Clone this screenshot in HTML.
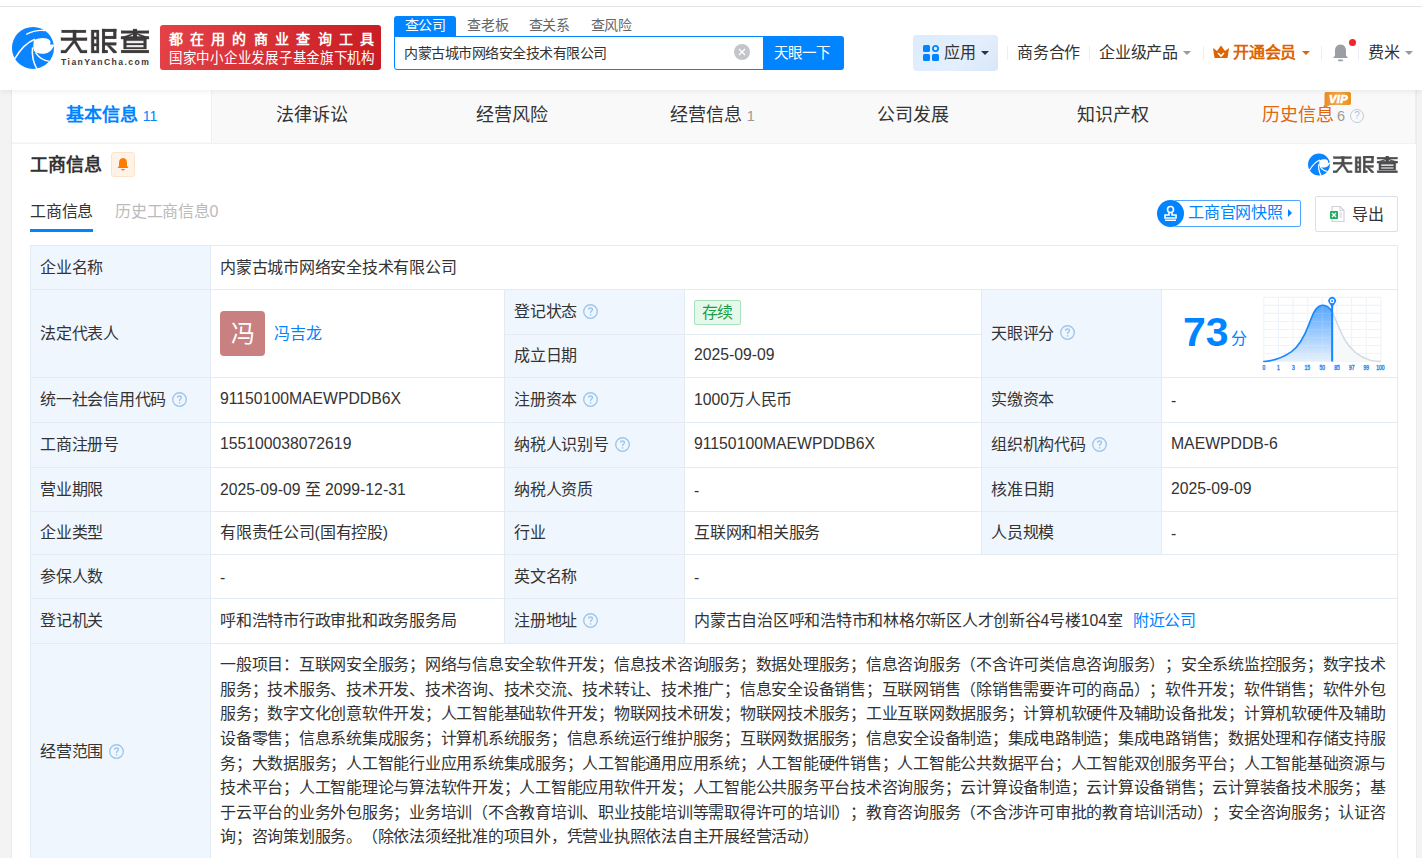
<!DOCTYPE html><html lang="zh-CN"><head><meta charset="utf-8"><style>
*{margin:0;padding:0;box-sizing:border-box}
html,body{text-spacing-trim:space-all;width:1422px;height:858px;overflow:hidden;background:#f3f3f3;font-family:"Liberation Sans",sans-serif;color:#333}
.abs{position:absolute}
.t{position:absolute;white-space:nowrap;line-height:1}
</style></head><body>
<div style="position:absolute;left:0;top:0;width:1422px;height:90px;z-index:5">
<div class="abs" style="left:0;top:0;width:1422px;height:90px;background:#fff;box-shadow:0 2px 5px rgba(0,0,0,0.06)"></div>
<div class="abs" style="left:0;top:6px;width:1422px;height:1px;background:#e5e5e5"></div>
<svg class="abs" style="left:8px;top:22px" width="52" height="52" viewBox="0 0 858 858">
<circle cx="412" cy="428" r="347" fill="#0a84ff"/>
<path d="M430 298 C520 250 640 250 690 300 C710 330 700 360 688 372 L780 372 L780 400 L752 404 C720 480 650 530 560 525 C500 520 470 510 455 505 C420 470 405 420 430 298 Z" fill="#fff"/>
<path d="M110 610 C190 470 300 340 445 285" stroke="#fff" stroke-width="26" fill="none"/>
<path d="M300 205 C400 150 520 130 610 140" stroke="#fff" stroke-width="22" fill="none"/>
<path d="M405 420 C390 560 420 680 480 780" stroke="#fff" stroke-width="26" fill="none"/>
<path d="M455 505 C520 600 600 640 680 650" stroke="#fff" stroke-width="24" fill="none"/>
</svg>
<svg class="abs" style="left:55px;top:22px" width="100" height="50" viewBox="0 0 1422 711" fill="#3d393a" stroke="#3d393a" stroke-width="4">
<rect x="95" y="115" width="345" height="38"/>
<rect x="85" y="225" width="370" height="40"/>
<rect x="255" y="115" width="45" height="150"/>
<path d="M255 265 L300 265 L190 400 L160 440 L85 440 L85 400 L145 400 Z"/>
<path d="M255 265 L300 265 L380 400 L455 400 L455 440 L360 440 Z"/>
<path d="M515 115 H625 V440 H515 Z M555 150 V210 H590 V150 Z M555 245 V305 H590 V245 Z M555 342 V405 H590 V342 Z" fill-rule="evenodd"/>
<rect x="670" y="100" width="40" height="340"/>
<rect x="670" y="100" width="200" height="40"/>
<rect x="830" y="100" width="40" height="140"/>
<rect x="690" y="200" width="160" height="40"/>
<rect x="690" y="292" width="180" height="38"/>
<rect x="670" y="400" width="80" height="40"/>
<path d="M735 330 L780 330 L875 420 L875 440 L830 440 Z"/>
<rect x="940" y="125" width="395" height="36"/>
<rect x="1110" y="100" width="55" height="130"/>
<path d="M1110 160 L1140 160 L985 240 L940 240 L940 220 Z"/>
<path d="M1165 160 L1135 160 L1290 240 L1335 240 L1335 220 Z"/>
<rect x="940" y="205" width="395" height="36"/>
<path d="M975 240 H1300 V385 H975 Z M1015 268 V302 H1260 V268 Z M1015 328 V358 H1260 V328 Z" fill-rule="evenodd"/>
<rect x="940" y="400" width="395" height="40"/>
</svg>
<div class="t" style="left:61px;top:57.5px;font-size:8.6px;font-weight:bold;letter-spacing:1.45px;color:#3d393a">TianYanCha.com</div>
<div class="abs" style="left:160px;top:25px;width:221px;height:45px;border-radius:3px;background:linear-gradient(100deg,#e44247,#c81c22)"></div>
<div class="t" style="left:168.5px;top:32px;font-size:14px;font-weight:bold;color:#fff;letter-spacing:7.3px">都在用的商业查询工具</div>
<div class="t" style="left:168.5px;top:50px;font-size:15px;color:#fff;letter-spacing:0.25px;font-weight:500;transform:scaleX(0.9);transform-origin:0 0">国家中小企业发展子基金旗下机构</div>
<div class="abs" style="left:394px;top:16px;width:62px;height:21px;background:#0084ff;border-radius:3px 3px 0 0"></div>
<div class="t" style="left:404.5px;top:16.5px;font-size:14px;color:#fff;line-height:16px;letter-spacing:-0.25px">查公司</div>
<div class="t" style="left:467px;top:16.5px;font-size:14px;color:#666;line-height:16px;letter-spacing:-0.25px">查老板</div>
<div class="t" style="left:528.5px;top:16.5px;font-size:14px;color:#666;line-height:16px;letter-spacing:-0.25px">查关系</div>
<div class="t" style="left:590.5px;top:16.5px;font-size:14px;color:#666;line-height:16px;letter-spacing:-0.25px">查风险</div>
<div class="abs" style="left:394px;top:36px;width:371px;height:34px;border:1px solid #0084ff;border-radius:0 0 0 3px;background:#fff"></div>
<div class="t" style="left:404px;top:45px;font-size:14px;color:#333;line-height:16px;letter-spacing:-0.5px">内蒙古城市网络安全技术有限公司</div>
<svg class="abs" style="left:734px;top:44px" width="16" height="16" viewBox="0 0 16 16"><circle cx="8" cy="8" r="8" fill="#c3c5ca"/><path d="M5 5 L11 11 M11 5 L5 11" stroke="#fff" stroke-width="1.3"/></svg>
<div class="abs" style="left:763px;top:36px;width:81px;height:34px;background:#0084ff;border-radius:0 3px 3px 0"></div>
<div class="t" style="left:774px;top:44.5px;font-size:14.5px;color:#fff;line-height:16px;letter-spacing:0px">天眼一下</div>
<div class="abs" style="left:913px;top:35px;width:85px;height:36px;border-radius:4px;background:linear-gradient(135deg,#dcecfd,#e3effd 60%,#d8e6f8)"></div>
<svg class="abs" style="left:923px;top:45px" width="17" height="16" viewBox="0 0 17 16"><rect x="0" y="0" width="7" height="7" rx="1.5" fill="#0084ff"/><circle cx="12.5" cy="3.5" r="2.6" fill="none" stroke="#0084ff" stroke-width="1.8"/><rect x="0" y="9" width="7" height="7" rx="1.5" fill="#0084ff"/><rect x="9" y="9" width="7" height="7" rx="1.5" fill="#0084ff"/></svg>
<div class="t" style="left:944px;top:45px;font-size:16px;line-height:16px;color:#333;letter-spacing:-0.25px">应用</div>
<div class="abs" style="left:981px;top:51px;width:0;height:0;border-left:4px solid transparent;border-right:4px solid transparent;border-top:4px solid #333"></div>
<div class="abs" style="left:1007px;top:46px;width:1px;height:14px;background:#eceef2"></div>
<div class="abs" style="left:1089px;top:46px;width:1px;height:14px;background:#eceef2"></div>
<div class="abs" style="left:1203px;top:46px;width:1px;height:14px;background:#eceef2"></div>
<div class="abs" style="left:1321px;top:46px;width:1px;height:14px;background:#eceef2"></div>
<div class="abs" style="left:1358px;top:46px;width:1px;height:14px;background:#eceef2"></div>
<div class="t" style="left:1017px;top:45px;font-size:16px;line-height:16px;color:#333;letter-spacing:-0.25px">商务合作</div>
<div class="t" style="left:1099px;top:45px;font-size:16px;line-height:16px;color:#333;letter-spacing:-0.25px">企业级产品</div>
<div class="abs" style="left:1183px;top:51px;width:0;height:0;border-left:4px solid transparent;border-right:4px solid transparent;border-top:4px solid #999"></div>
<svg class="abs" style="left:1212px;top:45px" width="18" height="14" viewBox="0 0 18 14"><path d="M1 3 L5 6 L9 0.5 L13 6 L17 3 L15.5 13 H2.5 Z" fill="#dc6404"/><path d="M6 8 L9 11 L12 8" stroke="#fff" stroke-width="1.6" fill="none"/></svg>
<div class="t" style="left:1233px;top:45px;font-size:16px;line-height:16px;color:#dc6404;font-weight:bold;letter-spacing:-0.25px">开通会员</div>
<div class="abs" style="left:1302px;top:51px;width:0;height:0;border-left:4px solid transparent;border-right:4px solid transparent;border-top:4px solid #dc6404"></div>
<svg class="abs" style="left:1332px;top:43px" width="17" height="19" viewBox="0 0 17 19"><path d="M8.5 1.5 C4.5 1.5 3 4.5 3 8 V12.5 L1 15 H16 L14 12.5 V8 C14 4.5 12.5 1.5 8.5 1.5 Z" fill="#9a9ea5"/><rect x="6" y="16.5" width="5" height="1.8" rx="0.9" fill="#9a9ea5"/></svg>
<div class="abs" style="left:1349px;top:39px;width:7px;height:7px;border-radius:50%;background:#f5222d"></div>
<div class="t" style="left:1368px;top:45px;font-size:16px;line-height:16px;color:#333;letter-spacing:-0.25px">费米</div>
<div class="abs" style="left:1405px;top:51px;width:0;height:0;border-left:4px solid transparent;border-right:4px solid transparent;border-top:4px solid #999"></div>
</div>
<div class="abs" style="left:12px;top:90px;width:1404px;height:54px;background:#f9f9f9;border-bottom:1px solid #f2f2f2"></div>
<div class="abs" style="left:12px;top:90px;width:200px;height:53px;background:#fff;border-right:1px solid #f0f0f0;border-bottom:1px solid #f9f9f9"></div>
<div class="abs" style="left:1415px;top:90px;width:1px;height:54px;background:#eee"></div>
<div class="t" style="left:11.6px;top:105px;width:200px;text-align:center;font-size:18px;line-height:20px;color:#0084ff;font-weight:bold">基本信息<span style="font-size:14px;font-weight:normal;margin-left:5px">11</span></div>
<div class="t" style="left:211.9px;top:105px;width:200px;text-align:center;font-size:18px;line-height:20px;color:#333;font-weight:normal">法律诉讼</div>
<div class="t" style="left:412.1px;top:105px;width:200px;text-align:center;font-size:18px;line-height:20px;color:#333;font-weight:normal">经营风险</div>
<div class="t" style="left:612.4px;top:105px;width:200px;text-align:center;font-size:18px;line-height:20px;color:#333;font-weight:normal">经营信息<span style="font-size:14.5px;color:#999;margin-left:5px">1</span></div>
<div class="t" style="left:812.6px;top:105px;width:200px;text-align:center;font-size:18px;line-height:20px;color:#333;font-weight:normal">公司发展</div>
<div class="t" style="left:1012.9px;top:105px;width:200px;text-align:center;font-size:18px;line-height:20px;color:#333;font-weight:normal">知识产权</div>
<div class="t" style="left:1213.1px;top:105px;width:200px;text-align:center;font-size:18px;line-height:20px;color:#e0670f;font-weight:normal">历史信息<span style="font-size:14.5px;color:#999;margin-left:3px">6</span><span style="display:inline-block;width:14px;height:14px;border:1px solid #b8cce0;border-radius:50%;margin-left:5px;font-size:10px;line-height:12px;text-align:center;color:#a9c6e2;vertical-align:2px">?</span></div>
<svg class="abs" style="left:1324px;top:92px" width="28" height="16" viewBox="0 0 28 16"><defs><linearGradient id="vg" x1="0" x2="1"><stop offset="0" stop-color="#ea8c25"/><stop offset="0.5" stop-color="#f0a848"/><stop offset="1" stop-color="#e8901f"/></linearGradient></defs><path d="M2 0 H25 Q27 0 27 2 V11 Q27 13 25 13 H6 L1 16 L0.5 12 V2 Q0.5 0 2 0 Z" fill="url(#vg)"/><text x="14.5" y="10.8" text-anchor="middle" font-family="Liberation Sans" font-weight="bold" font-style="italic" font-size="11" fill="#fff" stroke="#fff" stroke-width="0.7" letter-spacing="0.4">VIP</text></svg>
<div class="abs" style="left:12px;top:144px;width:1404px;height:714px;background:#fff"></div>
<div class="abs" style="left:1416px;top:90px;width:1px;height:768px;background:#ebebeb"></div>
<div class="abs" style="left:11px;top:90px;width:1px;height:768px;background:#e9e9e9"></div>
<div class="t" style="left:30px;top:155px;font-size:18px;line-height:20px;font-weight:bold;color:#333">工商信息</div>
<div class="abs" style="left:111px;top:152px;width:24px;height:25px;background:#fff3e8;border:1px solid #fde3cc;border-radius:3px"></div>
<svg class="abs" style="left:116px;top:157px" width="14" height="14" viewBox="0 0 14 14"><path d="M7 1 C4.2 1 3 3.2 3 6 V9 L1.5 11 H12.5 L11 9 V6 C11 3.2 9.8 1 7 1 Z" fill="#ff7b00"/><path d="M5 12 H9 Q8.5 13.5 7 13.5 Q5.5 13.5 5 12Z" fill="#ff7b00"/></svg>
<svg class="abs" style="left:1305.5px;top:151px" width="27" height="27" viewBox="0 0 858 858">
<circle cx="412" cy="428" r="347" fill="#0a84ff"/>
<path d="M430 298 C520 250 640 250 690 300 C710 330 700 360 688 372 L780 372 L780 400 L752 404 C720 480 650 530 560 525 C500 520 470 510 455 505 C420 470 405 420 430 298 Z" fill="#fff"/>
<path d="M110 610 C190 470 300 340 445 285" stroke="#fff" stroke-width="40" fill="none"/>
<path d="M405 420 C390 560 420 680 480 780" stroke="#fff" stroke-width="40" fill="none"/>
<path d="M455 505 C520 600 600 640 680 650" stroke="#fff" stroke-width="36" fill="none"/>
</svg>
<svg class="abs" style="left:1333.3px;top:156.2px" width="64.5" height="16.8" viewBox="85 100 1250 340" preserveAspectRatio="none" fill="#4d4d4f" stroke="#4d4d4f" stroke-width="8">
<rect x="95" y="115" width="345" height="38"/>
<rect x="85" y="225" width="370" height="40"/>
<rect x="255" y="115" width="45" height="150"/>
<path d="M255 265 L300 265 L190 400 L160 440 L85 440 L85 400 L145 400 Z"/>
<path d="M255 265 L300 265 L380 400 L455 400 L455 440 L360 440 Z"/>
<path d="M515 115 H625 V440 H515 Z M555 150 V210 H590 V150 Z M555 245 V305 H590 V245 Z M555 342 V405 H590 V342 Z" fill-rule="evenodd"/>
<rect x="670" y="100" width="40" height="340"/>
<rect x="670" y="100" width="200" height="40"/>
<rect x="830" y="100" width="40" height="140"/>
<rect x="690" y="200" width="160" height="40"/>
<rect x="690" y="292" width="180" height="38"/>
<rect x="670" y="400" width="80" height="40"/>
<path d="M735 330 L780 330 L875 420 L875 440 L830 440 Z"/>
<rect x="940" y="125" width="395" height="36"/>
<rect x="1110" y="100" width="55" height="130"/>
<path d="M1110 160 L1140 160 L985 240 L940 240 L940 220 Z"/>
<path d="M1165 160 L1135 160 L1290 240 L1335 240 L1335 220 Z"/>
<rect x="940" y="205" width="395" height="36"/>
<path d="M975 240 H1300 V385 H975 Z M1015 268 V302 H1260 V268 Z M1015 328 V358 H1260 V328 Z" fill-rule="evenodd"/>
<rect x="940" y="400" width="395" height="40"/>
</svg>
<div class="t" style="left:30px;top:204px;font-size:16px;line-height:16px;color:#333;letter-spacing:-0.25px">工商信息</div>
<div class="abs" style="left:30px;top:229px;width:63px;height:3px;background:#0084ff"></div>
<div class="t" style="left:115px;top:204px;font-size:16px;line-height:16px;color:#bbb;letter-spacing:-0.25px">历史工商信息0</div>
<div class="abs" style="left:1174px;top:200px;width:127px;height:27px;border:1px solid #4ea6ff;border-radius:2px;background:#fff"></div>
<div class="abs" style="left:1157px;top:200px;width:27px;height:27px;border-radius:50%;background:#0084ff"></div>
<svg class="abs" style="left:1163px;top:205px" width="15" height="17" viewBox="0 0 15 17"><circle cx="7.5" cy="4.5" r="3" fill="none" stroke="#fff" stroke-width="1.6"/><path d="M6 7.5 V10 H2 V13 H13 V10 H9 V7.5" fill="none" stroke="#fff" stroke-width="1.6"/><rect x="2" y="14.5" width="11" height="1.5" fill="#fff"/></svg>
<div class="t" style="left:1188px;top:205px;font-size:16px;line-height:16px;color:#0084ff;letter-spacing:-0.25px">工商官网快照</div>
<div class="abs" style="left:1288px;top:209px;width:0;height:0;border-top:4px solid transparent;border-bottom:4px solid transparent;border-left:4.5px solid #0084ff"></div>
<div class="abs" style="left:1315px;top:196px;width:83px;height:36px;border:1px solid #dcdfe6;border-radius:2px;background:#fff"></div>
<svg class="abs" style="left:1329px;top:205px" width="17" height="18" viewBox="0 0 17 18"><path d="M3 1.5 H11 L15 5.5 V16.5 H3 Z" fill="#fff" stroke="#cfd2d8" stroke-width="1.2"/><path d="M11 1.5 V5.5 H15" fill="none" stroke="#cfd2d8" stroke-width="1"/><rect x="1" y="6" width="8" height="8" rx="1" fill="#1fae5f"/><path d="M3 8 L7 12 M7 8 L3 12" stroke="#fff" stroke-width="1.3"/><path d="M10.5 8 H13 M10.5 10 H13 M10.5 12 H13" stroke="#d0d0d0" stroke-width="1"/></svg>
<div class="t" style="left:1352px;top:207px;font-size:16px;line-height:16px;color:#333;letter-spacing:-0.25px">导出</div>
<div class="abs" style="left:30px;top:245px;width:181px;height:45px;background:#f0f6fd;border:1px solid #e3ebf5"></div>
<div class="abs" style="left:40px;top:245px;height:45px;display:flex;align-items:center;white-space:nowrap;font-size:15.75px;line-height:20px"><span style="display:flex;align-items:center;"><span style="font-size:16px;letter-spacing:-0.25px">企业名称</span></span></div>
<div class="abs" style="left:210px;top:245px;width:1188px;height:45px;background:#fff;border:1px solid #e3ebf5"></div>
<div class="abs" style="left:220px;top:245px;height:45px;display:flex;align-items:center;white-space:nowrap;font-size:15.75px;line-height:20px"><span style="display:flex;align-items:center;"><span style="font-size:16px;letter-spacing:-0.25px">内蒙古城市网络安全技术有限公司</span></span></div>
<div class="abs" style="left:30px;top:289px;width:181px;height:89px;background:#f0f6fd;border:1px solid #e3ebf5"></div>
<div class="abs" style="left:40px;top:289px;height:89px;display:flex;align-items:center;white-space:nowrap;font-size:15.75px;line-height:20px"><span style="display:flex;align-items:center;"><span style="font-size:16px;letter-spacing:-0.25px">法定代表人</span></span></div>
<div class="abs" style="left:210px;top:289px;width:295px;height:89px;background:#fff;border:1px solid #e3ebf5"></div>
<div class="abs" style="left:220px;top:289px;height:89px;display:flex;align-items:center;white-space:nowrap;font-size:15.75px;line-height:20px"><span style="display:flex;align-items:center;"><span style="display:inline-block;margin-top:0px;width:45px;height:45px;border-radius:4px;background:#c98080;color:#fff;font-size:24px;line-height:45px;text-align:center">冯</span><span style="color:#0084ff;margin-left:9px;font-size:16px;letter-spacing:-0.25px">冯吉龙</span></span></div>
<div class="abs" style="left:504px;top:289px;width:181px;height:46px;background:#f0f6fd;border:1px solid #e3ebf5"></div>
<div class="abs" style="left:514px;top:289px;height:46px;display:flex;align-items:center;white-space:nowrap;font-size:15.75px;line-height:20px"><span style="display:flex;align-items:center;"><span style="font-size:16px;letter-spacing:-0.25px">登记状态</span><svg style="margin-left:6px;margin-top:-2px;flex:none" width="15" height="15" viewBox="0 0 15 15"><circle cx="7.5" cy="7.5" r="6.8" fill="none" stroke="#9dc6ea" stroke-width="1.35"/><path d="M5.6 5.8 C5.6 4.6 6.5 4 7.5 4 C8.6 4 9.4 4.7 9.4 5.7 C9.4 6.9 7.9 7.1 7.6 8.2 V9" fill="none" stroke="#9dc6ea" stroke-width="1.35"/><circle cx="7.6" cy="10.9" r="0.8" fill="#9dc6ea"/></svg></span></div>
<div class="abs" style="left:684px;top:289px;width:298px;height:46px;background:#fff;border:1px solid #e3ebf5"></div>
<div class="abs" style="left:694px;top:289px;height:46px;display:flex;align-items:center;white-space:nowrap;font-size:15.75px;line-height:20px"><span style="display:flex;align-items:center;"><span style="display:inline-block;height:25px;padding:0 6.5px;border:1px solid #a8e2bd;background:#e6f8ec;color:#1a9f48;border-radius:2px;line-height:23px;font-size:16px;letter-spacing:-0.25px">存续</span></span></div>
<div class="abs" style="left:504px;top:334px;width:181px;height:44px;background:#f0f6fd;border:1px solid #e3ebf5"></div>
<div class="abs" style="left:514px;top:334px;height:44px;display:flex;align-items:center;white-space:nowrap;font-size:15.75px;line-height:20px"><span style="display:flex;align-items:center;"><span style="font-size:16px;letter-spacing:-0.25px">成立日期</span></span></div>
<div class="abs" style="left:684px;top:334px;width:298px;height:44px;background:#fff;border:1px solid #e3ebf5"></div>
<div class="abs" style="left:694px;top:334px;height:44px;display:flex;align-items:center;white-space:nowrap;font-size:15.75px;line-height:20px"><span style="display:flex;align-items:center;margin-top:-2px">2025-09-09</span></div>
<div class="abs" style="left:981px;top:289px;width:181px;height:89px;background:#f0f6fd;border:1px solid #e3ebf5"></div>
<div class="abs" style="left:991px;top:289px;height:89px;display:flex;align-items:center;white-space:nowrap;font-size:15.75px;line-height:20px"><span style="display:flex;align-items:center;"><span style="font-size:16px;letter-spacing:-0.25px">天眼评分</span><svg style="margin-left:6px;margin-top:-2px;flex:none" width="15" height="15" viewBox="0 0 15 15"><circle cx="7.5" cy="7.5" r="6.8" fill="none" stroke="#9dc6ea" stroke-width="1.35"/><path d="M5.6 5.8 C5.6 4.6 6.5 4 7.5 4 C8.6 4 9.4 4.7 9.4 5.7 C9.4 6.9 7.9 7.1 7.6 8.2 V9" fill="none" stroke="#9dc6ea" stroke-width="1.35"/><circle cx="7.6" cy="10.9" r="0.8" fill="#9dc6ea"/></svg></span></div>
<div class="abs" style="left:1161px;top:289px;width:237px;height:89px;background:#fff;border:1px solid #e3ebf5"></div>
<div class="abs" style="left:1171px;top:289px;height:89px;display:flex;align-items:center;white-space:nowrap;font-size:15.75px;line-height:20px"><span style="display:flex;align-items:center;"></span></div>
<div class="abs" style="left:30px;top:377px;width:181px;height:46px;background:#f0f6fd;border:1px solid #e3ebf5"></div>
<div class="abs" style="left:40px;top:377px;height:46px;display:flex;align-items:center;white-space:nowrap;font-size:15.75px;line-height:20px"><span style="display:flex;align-items:center;"><span style="font-size:16px;letter-spacing:-0.25px">统一社会信用代码</span><svg style="margin-left:6px;margin-top:-2px;flex:none" width="15" height="15" viewBox="0 0 15 15"><circle cx="7.5" cy="7.5" r="6.8" fill="none" stroke="#9dc6ea" stroke-width="1.35"/><path d="M5.6 5.8 C5.6 4.6 6.5 4 7.5 4 C8.6 4 9.4 4.7 9.4 5.7 C9.4 6.9 7.9 7.1 7.6 8.2 V9" fill="none" stroke="#9dc6ea" stroke-width="1.35"/><circle cx="7.6" cy="10.9" r="0.8" fill="#9dc6ea"/></svg></span></div>
<div class="abs" style="left:210px;top:377px;width:295px;height:46px;background:#fff;border:1px solid #e3ebf5"></div>
<div class="abs" style="left:220px;top:377px;height:46px;display:flex;align-items:center;white-space:nowrap;font-size:15.75px;line-height:20px"><span style="display:flex;align-items:center;margin-top:-2px">91150100MAEWPDDB6X</span></div>
<div class="abs" style="left:504px;top:377px;width:181px;height:46px;background:#f0f6fd;border:1px solid #e3ebf5"></div>
<div class="abs" style="left:514px;top:377px;height:46px;display:flex;align-items:center;white-space:nowrap;font-size:15.75px;line-height:20px"><span style="display:flex;align-items:center;"><span style="font-size:16px;letter-spacing:-0.25px">注册资本</span><svg style="margin-left:6px;margin-top:-2px;flex:none" width="15" height="15" viewBox="0 0 15 15"><circle cx="7.5" cy="7.5" r="6.8" fill="none" stroke="#9dc6ea" stroke-width="1.35"/><path d="M5.6 5.8 C5.6 4.6 6.5 4 7.5 4 C8.6 4 9.4 4.7 9.4 5.7 C9.4 6.9 7.9 7.1 7.6 8.2 V9" fill="none" stroke="#9dc6ea" stroke-width="1.35"/><circle cx="7.6" cy="10.9" r="0.8" fill="#9dc6ea"/></svg></span></div>
<div class="abs" style="left:684px;top:377px;width:298px;height:46px;background:#fff;border:1px solid #e3ebf5"></div>
<div class="abs" style="left:694px;top:377px;height:46px;display:flex;align-items:center;white-space:nowrap;font-size:15.75px;line-height:20px"><span style="display:flex;align-items:center;">1000<span style="font-size:16px;letter-spacing:-0.25px">万人民币</span></span></div>
<div class="abs" style="left:981px;top:377px;width:181px;height:46px;background:#f0f6fd;border:1px solid #e3ebf5"></div>
<div class="abs" style="left:991px;top:377px;height:46px;display:flex;align-items:center;white-space:nowrap;font-size:15.75px;line-height:20px"><span style="display:flex;align-items:center;"><span style="font-size:16px;letter-spacing:-0.25px">实缴资本</span></span></div>
<div class="abs" style="left:1161px;top:377px;width:237px;height:46px;background:#fff;border:1px solid #e3ebf5"></div>
<div class="abs" style="left:1171px;top:377px;height:46px;display:flex;align-items:center;white-space:nowrap;font-size:15.75px;line-height:20px"><span style="display:flex;align-items:center;margin-top:2px">-</span></div>
<div class="abs" style="left:30px;top:422px;width:181px;height:46px;background:#f0f6fd;border:1px solid #e3ebf5"></div>
<div class="abs" style="left:40px;top:422px;height:46px;display:flex;align-items:center;white-space:nowrap;font-size:15.75px;line-height:20px"><span style="display:flex;align-items:center;"><span style="font-size:16px;letter-spacing:-0.25px">工商注册号</span></span></div>
<div class="abs" style="left:210px;top:422px;width:295px;height:46px;background:#fff;border:1px solid #e3ebf5"></div>
<div class="abs" style="left:220px;top:422px;height:46px;display:flex;align-items:center;white-space:nowrap;font-size:15.75px;line-height:20px"><span style="display:flex;align-items:center;margin-top:-2px">155100038072619</span></div>
<div class="abs" style="left:504px;top:422px;width:181px;height:46px;background:#f0f6fd;border:1px solid #e3ebf5"></div>
<div class="abs" style="left:514px;top:422px;height:46px;display:flex;align-items:center;white-space:nowrap;font-size:15.75px;line-height:20px"><span style="display:flex;align-items:center;"><span style="font-size:16px;letter-spacing:-0.25px">纳税人识别号</span><svg style="margin-left:6px;margin-top:-2px;flex:none" width="15" height="15" viewBox="0 0 15 15"><circle cx="7.5" cy="7.5" r="6.8" fill="none" stroke="#9dc6ea" stroke-width="1.35"/><path d="M5.6 5.8 C5.6 4.6 6.5 4 7.5 4 C8.6 4 9.4 4.7 9.4 5.7 C9.4 6.9 7.9 7.1 7.6 8.2 V9" fill="none" stroke="#9dc6ea" stroke-width="1.35"/><circle cx="7.6" cy="10.9" r="0.8" fill="#9dc6ea"/></svg></span></div>
<div class="abs" style="left:684px;top:422px;width:298px;height:46px;background:#fff;border:1px solid #e3ebf5"></div>
<div class="abs" style="left:694px;top:422px;height:46px;display:flex;align-items:center;white-space:nowrap;font-size:15.75px;line-height:20px"><span style="display:flex;align-items:center;margin-top:-2px">91150100MAEWPDDB6X</span></div>
<div class="abs" style="left:981px;top:422px;width:181px;height:46px;background:#f0f6fd;border:1px solid #e3ebf5"></div>
<div class="abs" style="left:991px;top:422px;height:46px;display:flex;align-items:center;white-space:nowrap;font-size:15.75px;line-height:20px"><span style="display:flex;align-items:center;"><span style="font-size:16px;letter-spacing:-0.25px">组织机构代码</span><svg style="margin-left:6px;margin-top:-2px;flex:none" width="15" height="15" viewBox="0 0 15 15"><circle cx="7.5" cy="7.5" r="6.8" fill="none" stroke="#9dc6ea" stroke-width="1.35"/><path d="M5.6 5.8 C5.6 4.6 6.5 4 7.5 4 C8.6 4 9.4 4.7 9.4 5.7 C9.4 6.9 7.9 7.1 7.6 8.2 V9" fill="none" stroke="#9dc6ea" stroke-width="1.35"/><circle cx="7.6" cy="10.9" r="0.8" fill="#9dc6ea"/></svg></span></div>
<div class="abs" style="left:1161px;top:422px;width:237px;height:46px;background:#fff;border:1px solid #e3ebf5"></div>
<div class="abs" style="left:1171px;top:422px;height:46px;display:flex;align-items:center;white-space:nowrap;font-size:15.75px;line-height:20px"><span style="display:flex;align-items:center;margin-top:-2px">MAEWPDDB-6</span></div>
<div class="abs" style="left:30px;top:467px;width:181px;height:45px;background:#f0f6fd;border:1px solid #e3ebf5"></div>
<div class="abs" style="left:40px;top:467px;height:45px;display:flex;align-items:center;white-space:nowrap;font-size:15.75px;line-height:20px"><span style="display:flex;align-items:center;"><span style="font-size:16px;letter-spacing:-0.25px">营业期限</span></span></div>
<div class="abs" style="left:210px;top:467px;width:295px;height:45px;background:#fff;border:1px solid #e3ebf5"></div>
<div class="abs" style="left:220px;top:467px;height:45px;display:flex;align-items:center;white-space:nowrap;font-size:15.75px;line-height:20px"><span style="display:flex;align-items:center;">2025-09-09&nbsp;<span style="font-size:16px;letter-spacing:-0.25px">至</span>&nbsp;2099-12-31</span></div>
<div class="abs" style="left:504px;top:467px;width:181px;height:45px;background:#f0f6fd;border:1px solid #e3ebf5"></div>
<div class="abs" style="left:514px;top:467px;height:45px;display:flex;align-items:center;white-space:nowrap;font-size:15.75px;line-height:20px"><span style="display:flex;align-items:center;"><span style="font-size:16px;letter-spacing:-0.25px">纳税人资质</span></span></div>
<div class="abs" style="left:684px;top:467px;width:298px;height:45px;background:#fff;border:1px solid #e3ebf5"></div>
<div class="abs" style="left:694px;top:467px;height:45px;display:flex;align-items:center;white-space:nowrap;font-size:15.75px;line-height:20px"><span style="display:flex;align-items:center;margin-top:2px">-</span></div>
<div class="abs" style="left:981px;top:467px;width:181px;height:45px;background:#f0f6fd;border:1px solid #e3ebf5"></div>
<div class="abs" style="left:991px;top:467px;height:45px;display:flex;align-items:center;white-space:nowrap;font-size:15.75px;line-height:20px"><span style="display:flex;align-items:center;"><span style="font-size:16px;letter-spacing:-0.25px">核准日期</span></span></div>
<div class="abs" style="left:1161px;top:467px;width:237px;height:45px;background:#fff;border:1px solid #e3ebf5"></div>
<div class="abs" style="left:1171px;top:467px;height:45px;display:flex;align-items:center;white-space:nowrap;font-size:15.75px;line-height:20px"><span style="display:flex;align-items:center;margin-top:-2px">2025-09-09</span></div>
<div class="abs" style="left:30px;top:511px;width:181px;height:44px;background:#f0f6fd;border:1px solid #e3ebf5"></div>
<div class="abs" style="left:40px;top:511px;height:44px;display:flex;align-items:center;white-space:nowrap;font-size:15.75px;line-height:20px"><span style="display:flex;align-items:center;"><span style="font-size:16px;letter-spacing:-0.25px">企业类型</span></span></div>
<div class="abs" style="left:210px;top:511px;width:295px;height:44px;background:#fff;border:1px solid #e3ebf5"></div>
<div class="abs" style="left:220px;top:511px;height:44px;display:flex;align-items:center;white-space:nowrap;font-size:15.75px;line-height:20px"><span style="display:flex;align-items:center;"><span style="font-size:16px;letter-spacing:-0.25px">有限责任公司</span>(<span style="font-size:16px;letter-spacing:-0.25px">国有控股</span>)</span></div>
<div class="abs" style="left:504px;top:511px;width:181px;height:44px;background:#f0f6fd;border:1px solid #e3ebf5"></div>
<div class="abs" style="left:514px;top:511px;height:44px;display:flex;align-items:center;white-space:nowrap;font-size:15.75px;line-height:20px"><span style="display:flex;align-items:center;"><span style="font-size:16px;letter-spacing:-0.25px">行业</span></span></div>
<div class="abs" style="left:684px;top:511px;width:298px;height:44px;background:#fff;border:1px solid #e3ebf5"></div>
<div class="abs" style="left:694px;top:511px;height:44px;display:flex;align-items:center;white-space:nowrap;font-size:15.75px;line-height:20px"><span style="display:flex;align-items:center;"><span style="font-size:16px;letter-spacing:-0.25px">互联网和相关服务</span></span></div>
<div class="abs" style="left:981px;top:511px;width:181px;height:44px;background:#f0f6fd;border:1px solid #e3ebf5"></div>
<div class="abs" style="left:991px;top:511px;height:44px;display:flex;align-items:center;white-space:nowrap;font-size:15.75px;line-height:20px"><span style="display:flex;align-items:center;"><span style="font-size:16px;letter-spacing:-0.25px">人员规模</span></span></div>
<div class="abs" style="left:1161px;top:511px;width:237px;height:44px;background:#fff;border:1px solid #e3ebf5"></div>
<div class="abs" style="left:1171px;top:511px;height:44px;display:flex;align-items:center;white-space:nowrap;font-size:15.75px;line-height:20px"><span style="display:flex;align-items:center;margin-top:2px">-</span></div>
<div class="abs" style="left:30px;top:554px;width:181px;height:45px;background:#f0f6fd;border:1px solid #e3ebf5"></div>
<div class="abs" style="left:40px;top:554px;height:45px;display:flex;align-items:center;white-space:nowrap;font-size:15.75px;line-height:20px"><span style="display:flex;align-items:center;"><span style="font-size:16px;letter-spacing:-0.25px">参保人数</span></span></div>
<div class="abs" style="left:210px;top:554px;width:295px;height:45px;background:#fff;border:1px solid #e3ebf5"></div>
<div class="abs" style="left:220px;top:554px;height:45px;display:flex;align-items:center;white-space:nowrap;font-size:15.75px;line-height:20px"><span style="display:flex;align-items:center;margin-top:2px">-</span></div>
<div class="abs" style="left:504px;top:554px;width:181px;height:45px;background:#f0f6fd;border:1px solid #e3ebf5"></div>
<div class="abs" style="left:514px;top:554px;height:45px;display:flex;align-items:center;white-space:nowrap;font-size:15.75px;line-height:20px"><span style="display:flex;align-items:center;"><span style="font-size:16px;letter-spacing:-0.25px">英文名称</span></span></div>
<div class="abs" style="left:684px;top:554px;width:714px;height:45px;background:#fff;border:1px solid #e3ebf5"></div>
<div class="abs" style="left:694px;top:554px;height:45px;display:flex;align-items:center;white-space:nowrap;font-size:15.75px;line-height:20px"><span style="display:flex;align-items:center;margin-top:2px">-</span></div>
<div class="abs" style="left:30px;top:598px;width:181px;height:46px;background:#f0f6fd;border:1px solid #e3ebf5"></div>
<div class="abs" style="left:40px;top:598px;height:46px;display:flex;align-items:center;white-space:nowrap;font-size:15.75px;line-height:20px"><span style="display:flex;align-items:center;"><span style="font-size:16px;letter-spacing:-0.25px">登记机关</span></span></div>
<div class="abs" style="left:210px;top:598px;width:295px;height:46px;background:#fff;border:1px solid #e3ebf5"></div>
<div class="abs" style="left:220px;top:598px;height:46px;display:flex;align-items:center;white-space:nowrap;font-size:15.75px;line-height:20px"><span style="display:flex;align-items:center;"><span style="font-size:16px;letter-spacing:-0.25px">呼和浩特市行政审批和政务服务局</span></span></div>
<div class="abs" style="left:504px;top:598px;width:181px;height:46px;background:#f0f6fd;border:1px solid #e3ebf5"></div>
<div class="abs" style="left:514px;top:598px;height:46px;display:flex;align-items:center;white-space:nowrap;font-size:15.75px;line-height:20px"><span style="display:flex;align-items:center;"><span style="font-size:16px;letter-spacing:-0.25px">注册地址</span><svg style="margin-left:6px;margin-top:-2px;flex:none" width="15" height="15" viewBox="0 0 15 15"><circle cx="7.5" cy="7.5" r="6.8" fill="none" stroke="#9dc6ea" stroke-width="1.35"/><path d="M5.6 5.8 C5.6 4.6 6.5 4 7.5 4 C8.6 4 9.4 4.7 9.4 5.7 C9.4 6.9 7.9 7.1 7.6 8.2 V9" fill="none" stroke="#9dc6ea" stroke-width="1.35"/><circle cx="7.6" cy="10.9" r="0.8" fill="#9dc6ea"/></svg></span></div>
<div class="abs" style="left:684px;top:598px;width:714px;height:46px;background:#fff;border:1px solid #e3ebf5"></div>
<div class="abs" style="left:694px;top:598px;height:46px;display:flex;align-items:center;white-space:nowrap;font-size:15.75px;line-height:20px"><span style="display:flex;align-items:center;"><span style="font-size:16px;letter-spacing:-0.25px">内蒙古自治区呼和浩特市和林格尔新区人才创新谷</span>4<span style="font-size:16px;letter-spacing:-0.25px">号楼</span>104<span style="font-size:16px;letter-spacing:-0.25px">室</span><span style="color:#0084ff;margin-left:10px;font-size:16px;letter-spacing:-0.25px">附近公司</span></span></div>
<div class="abs" style="left:30px;top:643px;width:181px;height:218px;background:#f0f6fd;border:1px solid #e3ebf5"></div>
<div class="abs" style="left:40px;top:643px;height:218px;display:flex;align-items:center;white-space:nowrap;font-size:15.75px;line-height:20px"><span style="display:flex;align-items:center;"><span style="font-size:16px;letter-spacing:-0.25px">经营范围</span><svg style="margin-left:6px;margin-top:-2px;flex:none" width="15" height="15" viewBox="0 0 15 15"><circle cx="7.5" cy="7.5" r="6.8" fill="none" stroke="#9dc6ea" stroke-width="1.35"/><path d="M5.6 5.8 C5.6 4.6 6.5 4 7.5 4 C8.6 4 9.4 4.7 9.4 5.7 C9.4 6.9 7.9 7.1 7.6 8.2 V9" fill="none" stroke="#9dc6ea" stroke-width="1.35"/><circle cx="7.6" cy="10.9" r="0.8" fill="#9dc6ea"/></svg></span></div>
<div class="abs" style="left:210px;top:643px;width:1188px;height:217px;background:#fff;border:1px solid #e3ebf5"></div>
<div class="t" style="left:220px;top:655.00px;font-size:16px;line-height:20px;letter-spacing:-0.25px">一般项目：互联网安全服务；网络与信息安全软件开发；信息技术咨询服务；数据处理服务；信息咨询服务（不含许可类信息咨询服务）；安全系统监控服务；数字技术</div>
<div class="t" style="left:220px;top:679.64px;font-size:16px;line-height:20px;letter-spacing:-0.25px">服务；技术服务、技术开发、技术咨询、技术交流、技术转让、技术推广；信息安全设备销售；互联网销售（除销售需要许可的商品）；软件开发；软件销售；软件外包</div>
<div class="t" style="left:220px;top:704.28px;font-size:16px;line-height:20px;letter-spacing:-0.25px">服务；数字文化创意软件开发；人工智能基础软件开发；物联网技术研发；物联网技术服务；工业互联网数据服务；计算机软硬件及辅助设备批发；计算机软硬件及辅助</div>
<div class="t" style="left:220px;top:728.92px;font-size:16px;line-height:20px;letter-spacing:-0.25px">设备零售；信息系统集成服务；计算机系统服务；信息系统运行维护服务；互联网数据服务；信息安全设备制造；集成电路制造；集成电路销售；数据处理和存储支持服</div>
<div class="t" style="left:220px;top:753.56px;font-size:16px;line-height:20px;letter-spacing:-0.25px">务；大数据服务；人工智能行业应用系统集成服务；人工智能通用应用系统；人工智能硬件销售；人工智能公共数据平台；人工智能双创服务平台；人工智能基础资源与</div>
<div class="t" style="left:220px;top:778.20px;font-size:16px;line-height:20px;letter-spacing:-0.25px">技术平台；人工智能理论与算法软件开发；人工智能应用软件开发；人工智能公共服务平台技术咨询服务；云计算设备制造；云计算设备销售；云计算装备技术服务；基</div>
<div class="t" style="left:220px;top:802.84px;font-size:16px;line-height:20px;letter-spacing:-0.25px">于云平台的业务外包服务；业务培训（不含教育培训、职业技能培训等需取得许可的培训）；教育咨询服务（不含涉许可审批的教育培训活动）；安全咨询服务；认证咨</div>
<div class="t" style="left:220px;top:827.48px;font-size:16px;line-height:20px;letter-spacing:-0.25px">询；咨询策划服务。（除依法须经批准的项目外，凭营业执照依法自主开展经营活动）</div>
<svg class="abs" style="left:1258px;top:292px" width="130" height="80" viewBox="0 0 1394 858">
<defs><linearGradient id="cg" x1="0" y1="0" x2="0" y2="1"><stop offset="0" stop-color="#56a6ff"/><stop offset="1" stop-color="#e6f1fc"/></linearGradient></defs>
<g stroke="#edf3fa" stroke-width="12" fill="none"><line x1="62" y1="58" x2="62" y2="745"/><line x1="219" y1="58" x2="219" y2="745"/><line x1="376" y1="58" x2="376" y2="745"/><line x1="533" y1="58" x2="533" y2="745"/><line x1="690" y1="58" x2="690" y2="745"/><line x1="847" y1="58" x2="847" y2="745"/><line x1="1004" y1="58" x2="1004" y2="745"/><line x1="1161" y1="58" x2="1161" y2="745"/><line x1="1318" y1="58" x2="1318" y2="745"/><line x1="62" y1="58.0" x2="1318" y2="58.0"/><line x1="62" y1="143.9" x2="1318" y2="143.9"/><line x1="62" y1="229.8" x2="1318" y2="229.8"/><line x1="62" y1="315.7" x2="1318" y2="315.7"/><line x1="62" y1="401.6" x2="1318" y2="401.6"/><line x1="62" y1="487.5" x2="1318" y2="487.5"/><line x1="62" y1="573.4" x2="1318" y2="573.4"/><line x1="62" y1="659.3" x2="1318" y2="659.3"/><line x1="62" y1="745.2" x2="1318" y2="745.2"/></g>
<path d="M62 745 C150 740 260 710 360 640 C440 580 500 470 545 350 C590 230 620 150 690 143 C740 140 775 180 795 215 L795 745 Z" fill="url(#cg)"/>
<path d="M795 215 C830 280 870 400 930 510 C1000 630 1100 700 1200 730 C1250 742 1290 745 1318 745 L1318 745 L795 745 Z" fill="#f7f8f9"/>
<g stroke="#fff" stroke-width="10" fill="none" opacity="0.15"><line x1="62" y1="58" x2="62" y2="745"/><line x1="219" y1="58" x2="219" y2="745"/><line x1="376" y1="58" x2="376" y2="745"/><line x1="533" y1="58" x2="533" y2="745"/><line x1="690" y1="58" x2="690" y2="745"/><line x1="847" y1="58" x2="847" y2="745"/><line x1="1004" y1="58" x2="1004" y2="745"/><line x1="1161" y1="58" x2="1161" y2="745"/><line x1="1318" y1="58" x2="1318" y2="745"/><line x1="62" y1="58.0" x2="1318" y2="58.0"/><line x1="62" y1="143.9" x2="1318" y2="143.9"/><line x1="62" y1="229.8" x2="1318" y2="229.8"/><line x1="62" y1="315.7" x2="1318" y2="315.7"/><line x1="62" y1="401.6" x2="1318" y2="401.6"/><line x1="62" y1="487.5" x2="1318" y2="487.5"/><line x1="62" y1="573.4" x2="1318" y2="573.4"/><line x1="62" y1="659.3" x2="1318" y2="659.3"/><line x1="62" y1="745.2" x2="1318" y2="745.2"/></g>
<path d="M62 745 C150 740 260 710 360 640 C440 580 500 470 545 350 C590 230 620 150 690 143 C740 140 775 180 795 215" stroke="#1a86ff" stroke-width="17" fill="none" stroke-linecap="round"/>
<path d="M795 215 C830 280 870 400 930 510 C1000 630 1100 700 1200 730 C1250 742 1290 745 1318 745" stroke="#cfd9e2" stroke-width="15" fill="none"/>
<rect x="784" y="140" width="22" height="605" fill="#1a86ff"/>
<path d="M795 165 L762 118 A41 41 0 1 1 828 118 Z" fill="#1a86ff"/>
<circle cx="795" cy="97" r="24" fill="#fff"/><circle cx="795" cy="97" r="11" fill="#1a86ff"/>
<g font-family="Liberation Sans" font-size="76" fill="#2f8bf0" stroke="#2f8bf0" stroke-width="5" transform="scale(0.7,1)" ><text x="89" y="836" text-anchor="middle">0</text><text x="311" y="836" text-anchor="middle">1</text><text x="543" y="836" text-anchor="middle">3</text><text x="754" y="836" text-anchor="middle">15</text><text x="986" y="836" text-anchor="middle">50</text><text x="1211" y="836" text-anchor="middle">85</text><text x="1436" y="836" text-anchor="middle">97</text><text x="1657" y="836" text-anchor="middle">99</text><text x="1874" y="836" text-anchor="middle">100</text></g>
</svg>
<div class="t" style="left:1183px;top:310px;font-size:41px;line-height:44px;font-weight:bold;color:#0084ff">73</div>
<div class="t" style="left:1231px;top:331px;font-size:16px;line-height:16px;color:#0084ff">分</div>
</body></html>
